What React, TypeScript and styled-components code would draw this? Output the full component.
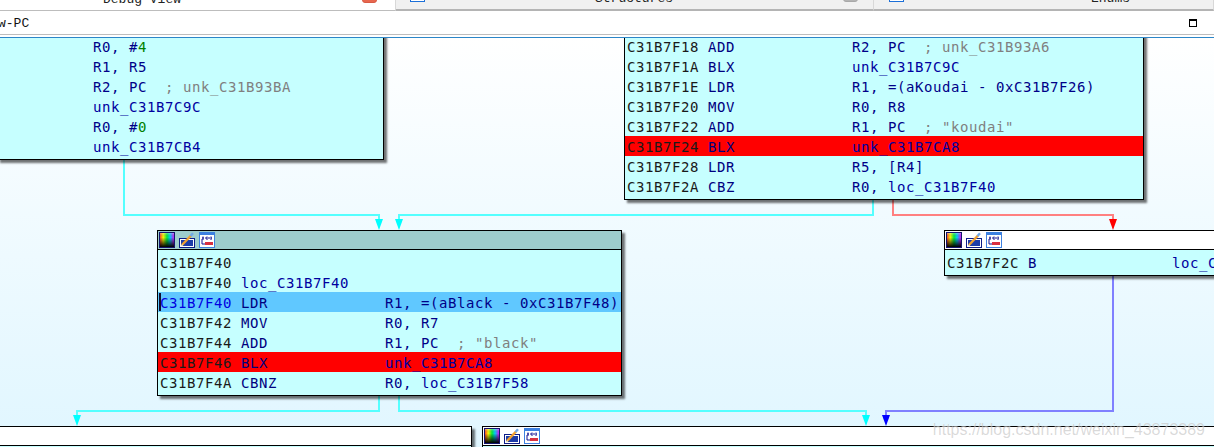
import React from "react";
import styled, { createGlobalStyle } from "styled-components";

type Kind = "addr" | "op" | "label" | "reg" | "num" | "note";
type Token = [Kind, string];
type Line = { tokens: Token[]; tone?: "selected" | "break" };

const OPERAND_COLUMN = 25;

function ins(addr: string, mnemonic: string, ...operands: Token[]): Token[] {
    return [["addr", addr], ["op", ` ${mnemonic}`.padEnd(OPERAND_COLUMN - addr.length)], ...operands];
}

const reg = (text: string): Token => ["reg", text];
const label = (text: string): Token => ["label", text];
const note = (text: string): Token => ["note", text];
const num = (text: string): Token => ["num", text];

const leftLines: Line[] = [
    { tokens: [reg("R0, #"), num("4")] },
    { tokens: [reg("R1, R5")] },
    { tokens: [reg("R2, PC"), note("  ; unk_C31B93BA")] },
    { tokens: [label("unk_C31B7C9C")] },
    { tokens: [reg("R0, #"), num("0")] },
    { tokens: [label("unk_C31B7CB4")] },
];

const rightLines: Line[] = [
    { tokens: ins("C31B7F18", "ADD", reg("R2, PC"), note("  ; unk_C31B93A6")) },
    { tokens: ins("C31B7F1A", "BLX", label("unk_C31B7C9C")) },
    { tokens: ins("C31B7F1E", "LDR", reg("R1, =(aKoudai - 0xC31B7F26)")) },
    { tokens: ins("C31B7F20", "MOV", reg("R0, R8")) },
    { tokens: ins("C31B7F22", "ADD", reg("R1, PC"), note('  ; "koudai"')) },
    { tokens: ins("C31B7F24", "BLX", label("unk_C31B7CA8")), tone: "break" },
    { tokens: ins("C31B7F28", "LDR", reg("R5, [R4]")) },
    { tokens: ins("C31B7F2A", "CBZ", reg("R0, "), label("loc_C31B7F40")) },
];

const centerLines: Line[] = [
    { tokens: [["addr", "C31B7F40"]] },
    { tokens: [["addr", "C31B7F40 "], label("loc_C31B7F40")] },
    { tokens: ins("C31B7F40", "LDR", reg("R1, =(aBlack - 0xC31B7F48)")), tone: "selected" },
    { tokens: ins("C31B7F42", "MOV", reg("R0, R7")) },
    { tokens: ins("C31B7F44", "ADD", reg("R1, PC"), note('  ; "black"')) },
    { tokens: ins("C31B7F46", "BLX", label("unk_C31B7CA8")), tone: "break" },
    { tokens: ins("C31B7F4A", "CBNZ", reg("R0, "), label("loc_C31B7F58")) },
];

const branchLines: Line[] = [
    { tokens: ins("C31B7F2C", "B", label("loc_C31B7F58")) },
];

const tokenColors: Record<Kind, string> = {
    addr: "#1a1a1a",
    op: "#00007f",
    label: "#0000a0",
    reg: "#000088",
    num: "#007f00",
    note: "#808080",
};

function PaletteIcon() {
    return (
        <svg width="16" height="16" viewBox="0 0 16 16">
            <defs>
                <linearGradient id="hue" x1="0" x2="1" y1="0" y2="0">
                    <stop offset="0" stopColor="#ff3030" />
                    <stop offset="0.25" stopColor="#ffff00" />
                    <stop offset="0.5" stopColor="#00f040" />
                    <stop offset="0.7" stopColor="#00d0ff" />
                    <stop offset="1" stopColor="#f000ff" />
                </linearGradient>
                <linearGradient id="shade" x1="0" x2="0" y1="0" y2="1">
                    <stop offset="0" stopColor="#fff" stopOpacity="0.35" />
                    <stop offset="0.3" stopColor="#000" stopOpacity="0" />
                    <stop offset="1" stopColor="#000" stopOpacity="1" />
                </linearGradient>
            </defs>
            <rect x="0.5" y="0.5" width="15" height="15" fill="url(#hue)" stroke="#14146e" />
            <rect x="1" y="1" width="14" height="14" fill="url(#shade)" />
        </svg>
    );
}

function PencilIcon() {
    return (
        <svg width="16" height="16" viewBox="0 0 16 16">
            <rect x="0.5" y="6.5" width="15" height="9" fill="#fff" stroke="#0c1c88" />
            <rect x="2" y="8" width="12" height="6" fill="#1c3ca8" />
            <path d="M3 13 L12 3.5" stroke="#f0a030" strokeWidth="2.4" />
            <path d="M11.5 4 L14 1.2" stroke="#70a8e8" strokeWidth="2.4" />
            <path d="M2.4 14 L3.6 12.6" stroke="#fff4c0" strokeWidth="1.4" />
        </svg>
    );
}

function GraphIcon() {
    return (
        <svg width="16" height="16" viewBox="0 0 16 16">
            <rect x="0.5" y="0.5" width="15" height="15" fill="#fff" stroke="#3c80e0" />
            <rect x="1" y="1" width="14" height="2" fill="#3c80e0" />
            <path d="M3 6 H13" stroke="#101090" strokeDasharray="2 1" />
            <path d="M4 4.5 V8 M8 4.5 V8 M12 4.5 V8" stroke="#101090" />
            <path d="M3 7 V12 H6" stroke="#101090" fill="none" />
            <rect x="6" y="10" width="8" height="3" fill="#d83040" />
        </svg>
    );
}

function CodeRow({ line }: { line: Line }) {
    return (
        <Row $tone={line.tone}>
            {line.tokens.map(([kind, text], i) => (
                <Tok key={i} $kind={kind}>
                    {text}
                </Tok>
            ))}
        </Row>
    );
}

function Arrow({ x, tip, color }: { x: number; tip: number; color: string }) {
    return <polygon points={`${x - 4},${tip - 11} ${x + 4},${tip - 11} ${x},${tip}`} fill={color} />;
}

function Edges() {
    return (
        <EdgeLayer viewBox="0 38 1214 409">
            <g fill="none" strokeWidth="2">
                <polyline stroke="#55ffff" points="124,158 124,215 379,215 379,222" />
                <polyline stroke="#55ffff" points="873,199 873,215 399,215 399,222" />
                <polyline stroke="#ff8080" points="893,199 893,215 1113,215 1113,222" />
                <polyline stroke="#55ffff" points="379,395 379,411 77,411 77,418" />
                <polyline stroke="#55ffff" points="399,395 399,411 866,411 866,418" />
                <polyline stroke="#8080ff" points="1113,275 1113,411 886,411 886,418" />
            </g>
            <Arrow x={379} tip={230} color="#00ffff" />
            <Arrow x={399} tip={230} color="#00ffff" />
            <Arrow x={1113} tip={230} color="#ff0000" />
            <Arrow x={77} tip={426} color="#00ffff" />
            <Arrow x={866} tip={426} color="#00ffff" />
            <Arrow x={886} tip={426} color="#0000ff" />
        </EdgeLayer>
    );
}

function NodeHeader({ active }: { active?: boolean }) {
    return (
        <Header $active={active}>
            <PaletteIcon />
            <PencilIcon />
            <GraphIcon />
        </Header>
    );
}

export default function App() {
    return (
        <>
            <GlobalStyle />
            <Page>
                <TabStrip>
                    <Tab $width={396} $active>
                        <TabLabel $left={103}>Debug View</TabLabel>
                        <TabIcon $tone="red" $left={181} />
                    </Tab>
                    <Tab $width={478}>
                        <TabIcon $tone="blue" $left={14} />
                        <TabLabel $left={170}>Structures</TabLabel>
                        <TabIcon $tone="gray" $left={170} />
                    </Tab>
                    <Tab $width={340}>
                        <TabIcon $tone="blue" $left={15} />
                        <TabLabel $left={187}>Enums</TabLabel>
                    </Tab>
                </TabStrip>
                <TitleBar>
                    <Title>w-PC</Title>
                    <Maximize />
                </TitleBar>
                <Canvas>
                    <Edges />
                    <Node $left={-3} $top={-5} $width={387}>
                        <Body $inset={93}>
                            {leftLines.map((line, i) => (
                                <CodeRow key={i} line={line} />
                            ))}
                        </Body>
                    </Node>
                    <Node $left={624} $top={-5} $width={520}>
                        <Body>
                            {rightLines.map((line, i) => (
                                <CodeRow key={i} line={line} />
                            ))}
                        </Body>
                    </Node>
                    <Node $left={157} $top={192} $width={465}>
                        <NodeHeader active />
                        <Body>
                            {centerLines.map((line, i) => (
                                <CodeRow key={i} line={line} />
                            ))}
                        </Body>
                    </Node>
                    <Node $left={944} $top={192} $width={300}>
                        <NodeHeader />
                        <Body>
                            {branchLines.map((line, i) => (
                                <CodeRow key={i} line={line} />
                            ))}
                        </Body>
                    </Node>
                    <Node $left={-3} $top={388} $width={475}>
                        <Header />
                        <Body />
                    </Node>
                    <Node $left={482} $top={388} $width={760}>
                        <NodeHeader />
                        <Body />
                    </Node>
                    <Watermark>https://blog.csdn.net/weixin_43873389</Watermark>
                </Canvas>
            </Page>
        </>
    );
}

const GlobalStyle = createGlobalStyle`
    html, body {
        margin: 0;
        padding: 0;
        background: #fff;
        overflow: hidden;
    }
`;

const Page = styled.div`
    display: flex;
    flex-direction: column;
    width: 1214px;
    height: 447px;
    overflow: hidden;
    background: #fff;
`;

const TabStrip = styled.div`
    display: flex;
    flex: none;
    height: 11px;
    overflow: hidden;
`;

const Tab = styled.div<{ $width: number; $active?: boolean }>`
    display: flex;
    flex: none;
    align-items: flex-end;
    box-sizing: border-box;
    width: ${(p) => p.$width}px;
    height: 11px;
    padding-bottom: 7px;
    background: ${(p) => (p.$active ? "#fff" : "#f0f0f0")};
    border-bottom: ${(p) => (p.$active ? "1px solid #bdbdbd" : "2px solid #b4b4b4")};
    border-right: 1px solid #d8d8d8;
`;

const TabLabel = styled.span<{ $left: number }>`
    margin-bottom: -3px;
    margin-left: ${(p) => p.$left}px;
    color: #222;
    font-family: "Liberation Mono", monospace;
    font-size: 13px;
    line-height: 13px;
    white-space: pre;
`;

const tabIconColors = {
    red: { fill: "#e8674f", line: "#d85a44" },
    blue: { fill: "#fff", line: "#1c6fd8" },
    gray: { fill: "#b4b4b4", line: "#a8a8a8" },
};

const TabIcon = styled.span<{ $tone: keyof typeof tabIconColors; $left: number }>`
    flex: none;
    box-sizing: border-box;
    width: 15px;
    height: 12px;
    margin-left: ${(p) => p.$left}px;
    background: ${(p) => tabIconColors[p.$tone].fill};
    border: 1px solid ${(p) => tabIconColors[p.$tone].line};
    border-radius: ${(p) => (p.$tone === "blue" ? 0 : 3)}px;
`;

const TitleBar = styled.div`
    display: flex;
    flex: none;
    align-items: center;
    justify-content: space-between;
    box-sizing: border-box;
    height: 24px;
    padding: 1px 17px 0 0;
    border-bottom: 1px solid #bdbdbd;
    margin-bottom: 2px;
`;

const Title = styled.span`
    margin-top: 1px;
    margin-left: -2px;
    color: #111;
    font-family: "Liberation Mono", monospace;
    font-size: 13px;
`;

const Maximize = styled.span`
    box-sizing: border-box;
    width: 8px;
    height: 8px;
    border: 1px solid #000;
    border-top-width: 2px;
`;

const Canvas = styled.div`
    position: relative;
    flex: 1;
    overflow: hidden;
    border-top: 1px solid #2c86c8;
    background: linear-gradient(#ffffff 0%, #f5fcff 30%, #e0f6ff 100%);
`;

const EdgeLayer = styled.svg`
    position: absolute;
    top: 0;
    left: 0;
    width: 1214px;
    height: 409px;
`;

const Node = styled.div<{ $left: number; $top: number; $width: number }>`
    position: absolute;
    top: ${(p) => p.$top}px;
    left: ${(p) => p.$left}px;
    box-sizing: border-box;
    width: ${(p) => p.$width}px;
    border: 1px solid #000;
    background: #c6ffff;
    box-shadow: 3px 3px 2px rgba(0, 0, 0, 0.55);
`;

const Header = styled.div<{ $active?: boolean }>`
    display: flex;
    align-items: center;
    gap: 4px;
    box-sizing: border-box;
    height: 19px;
    padding-left: 1px;
    background: ${(p) => (p.$active ? "#9ecdcd" : "#fff")};
    border-bottom: 1px solid #000;
`;

const Body = styled.div<{ $inset?: number }>`
    padding: 2px 0 3px ${(p) => p.$inset ?? 0}px;
`;

const rowBackgrounds = {
    selected: "#60c8ff",
    break: "#ff0000",
};

const Row = styled.div<{ $tone?: Line["tone"] }>`
    position: relative;
    height: 20px;
    padding-left: 2px;
    background: ${(p) => (p.$tone ? rowBackgrounds[p.$tone] : "transparent")};
    font-family: "DejaVu Sans Mono", monospace;
    font-size: 14px;
    letter-spacing: 0.57px;
    line-height: 22px;
    white-space: pre;

    ${(p) =>
        p.$tone === "selected" &&
        `
        &::before {
            content: "";
            position: absolute;
            top: 1px;
            left: 1px;
            width: 2px;
            height: 18px;
            background: #101030;
        }
        & > span:first-of-type {
            color: #0000e0;
        }
    `}
`;

const Tok = styled.span<{ $kind: Kind }>`
    color: ${(p) => tokenColors[p.$kind]};
`;

const Watermark = styled.span`
    position: absolute;
    right: 9px;
    bottom: 8px;
    color: rgba(120, 120, 120, 0.28);
    font-family: "Liberation Sans", sans-serif;
    font-size: 16px;
    line-height: 18px;
    text-shadow: 0 0 1px rgba(255, 255, 255, 0.7);
    white-space: pre;
`;
